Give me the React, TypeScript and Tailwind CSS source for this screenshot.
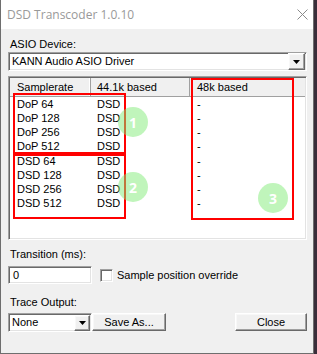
import React from "react";

const rows = [
  { name: "DoP 64", a: "DSD", b: "-" },
  { name: "DoP 128", a: "DSD", b: "-" },
  { name: "DoP 256", a: "DSD", b: "-" },
  { name: "DoP 512", a: "DSD", b: "-" },
  { name: "DSD 64", a: "DSD", b: "-" },
  { name: "DSD 128", a: "DSD", b: "-" },
  { name: "DSD 256", a: "DSD", b: "-" },
  { name: "DSD 512", a: "DSD", b: "-" },
];

const sunken =
  "border border-t-[#a0a0a0] border-l-[#a0a0a0] border-b-white border-r-white shadow-[inset_1px_1px_0_#696969,inset_-1px_-1px_0_#e3e3e3]";
const raised =
  "border border-t-white border-l-white border-b-[#696969] border-r-[#696969] shadow-[inset_-1px_-1px_0_#a0a0a0,inset_1px_1px_0_#f8f8f8]";

function Arrow() {
  return (
    <svg width="7" height="4" viewBox="0 0 7 4">
      <path d="M0 0h7L3.5 4z" fill="#000" />
    </svg>
  );
}

function DropButton({ className }: { className: string }) {
  return (
    <div className={`flex items-center justify-center bg-[#f0f0f0] ${raised} ${className}`}>
      <Arrow />
    </div>
  );
}

function Marker({ n, className }: { n: string; className: string }) {
  return (
    <div
      className={`absolute flex h-[30px] w-[30px] items-center justify-center rounded-full bg-[rgba(130,235,120,0.5)] font-['Open_Sans',sans-serif] text-[14px] font-bold text-white ${className}`}
    >
      {n}
    </div>
  );
}

export default function App() {
  return (
    <div className="h-[354px] w-[317px] overflow-hidden bg-[#3a2e3a]">
      <div className="relative flex h-[354px] w-[314px] flex-col border-x border-b border-[#6e6e6e] bg-[#f0f0f0] font-['Liberation_Sans',sans-serif] text-[11px] leading-[13px] text-black">
        <div className="flex h-[29px] shrink-0 items-center justify-between bg-white pl-[6px] pr-[5px]">
          <span className="font-['Open_Sans',sans-serif] text-[12px] text-[#999999]">DSD Transcoder 1.0.10</span>
          <svg width="11" height="11" viewBox="0 0 11 11">
            <path d="M0.5 0.5l10 10M10.5 0.5l-10 10" stroke="#8a8a8a" strokeWidth="1" />
          </svg>
        </div>

        <div className="flex flex-col pl-[7px] pr-[6px]">
          <div className="mt-[9px] pl-[2px]">ASIO Device:</div>

          <div className={`mt-[1px] flex h-[19px] items-center bg-white ${sunken}`}>
            <span className="flex-1 pl-[3px]">KANN Audio ASIO Driver</span>
            <DropButton className="mr-[1px] h-[17px] w-[17px]" />
          </div>

          <div className={`mt-[5px] flex h-[164px] flex-col bg-white ${sunken} p-[1px]`}>
            <div className="flex h-[19px] shrink-0 border-b border-[#a0a0a0] bg-[#f0f0f0]">
              <div className="flex w-[81px] items-center border-r border-[#a0a0a0] pl-[7px] shadow-[inset_-1px_0_0_#ffffff]">
                Samplerate
              </div>
              <div className="flex w-[99px] items-center border-r border-[#a0a0a0] pl-[6px]">44.1k based</div>
              <div className="flex flex-1 items-center pl-[7px]">48k based</div>
            </div>
            {rows.map((r, i) => (
              <div key={r.name} className={`flex h-[14px] items-center ${i === 4 ? "mt-[1px]" : ""}`}>
                <div className="w-[81px] pl-[7px]">{r.name}</div>
                <div className="w-[99px] pl-[6px]">{r.a}</div>
                <div className="flex-1 pl-[7px]">{r.b}</div>
              </div>
            ))}
          </div>

          <div className="mt-[8px] pl-[2px]">Transition (ms):</div>
          <div className="mt-[5px] flex items-center">
            <div className={`flex h-[18px] w-[84px] items-center bg-white pl-[4px] ${sunken}`}>0</div>
            <div className={`ml-[8px] h-[13px] w-[13px] bg-white ${sunken}`} />
            <span className="ml-[4px]">Sample position override</span>
          </div>

          <div className="mt-[12px] pl-[2px]">Trace Output:</div>
          <div className="mt-[4px] flex items-start">
            <div className={`flex h-[19px] w-[84px] items-center bg-white ${sunken}`}>
              <span className="flex-1 pl-[3px]">None</span>
              <DropButton className="mr-[1px] h-[16px] w-[16px]" />
            </div>
            <button className={`flex h-[18px] w-[74px] items-center justify-center bg-[#f0f0f0] ${raised}`}>
              Save As...
            </button>
            <div className="flex-1" />
            <button className={`flex h-[18px] w-[72px] items-center justify-center bg-[#f0f0f0] ${raised}`}>
              Close
            </button>
          </div>
        </div>

        <div className="absolute left-[12px] top-[93px] h-[61px] w-[113px] border-2 border-[#ff0000]" />
        <div className="absolute left-[12px] top-[154px] h-[65px] w-[113px] border-2 border-[#ff0000]" />
        <div className="absolute left-[190px] top-[78px] h-[142px] w-[103px] border-2 border-[#ff0000]" />
        <Marker n="1" className="left-[117px] top-[107px]" />
        <Marker n="2" className="left-[117px] top-[172px]" />
        <Marker n="3" className="left-[257px] top-[183px]" />
      </div>
    </div>
  );
}
